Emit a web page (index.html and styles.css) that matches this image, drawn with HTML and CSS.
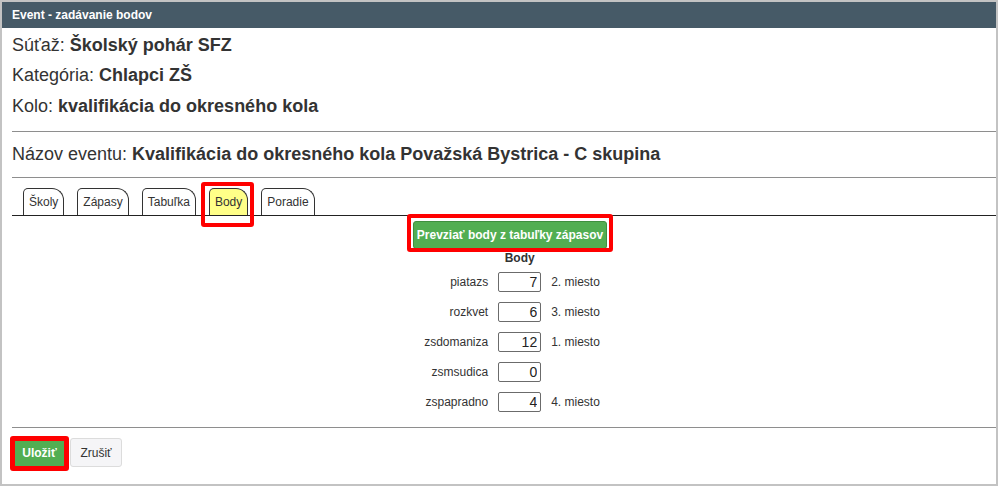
FILE: index.html
```html
<!DOCTYPE html>
<html lang="sk">
<head>
<meta charset="utf-8">
<title>Event - zadávanie bodov</title>
<link rel="stylesheet" href="styles.css">
</head>
<body>
<div class="window">
  <div class="titlebar">Event - zadávanie bodov</div>
  <div class="content">
    <div class="info">
      <div class="row">Súťaž: <b>Školský pohár SFZ</b></div>
      <div class="row">Kategória: <b>Chlapci ZŠ</b></div>
      <div class="row">Kolo: <b>kvalifikácia do okresného kola</b></div>
    </div>
    <hr class="sep sep-1">
    <div class="row row-name">Názov eventu: <b>Kvalifikácia do okresného kola Považská Bystrica - C skupina</b></div>
    <hr class="sep sep-2">
    <nav class="tabs">
      <span class="tab">Školy</span>
      <span class="tab">Zápasy</span>
      <span class="tab">Tabuľka</span>
      <span class="tab tab-active marked">Body</span>
      <span class="tab">Poradie</span>
    </nav>
    <div class="panel">
      <div class="actions">
        <button class="btn btn-green btn-take marked">Prevziať body z tabuľky zápasov</button>
      </div>
      <div class="points">
        <div class="lbl"></div><div class="head">Body</div><div class="place"></div>
        <div class="lbl">piatazs</div><input class="num" value="7"><div class="place">2. miesto</div>
        <div class="lbl">rozkvet</div><input class="num" value="6"><div class="place">3. miesto</div>
        <div class="lbl">zsdomaniza</div><input class="num" value="12"><div class="place">1. miesto</div>
        <div class="lbl">zsmsudica</div><input class="num" value="0"><div class="place"></div>
        <div class="lbl">zspapradno</div><input class="num" value="4"><div class="place">4. miesto</div>
      </div>
    </div>
    <hr class="sep sep-3">
    <div class="footer">
      <button class="btn btn-green btn-save marked">Uložiť</button>
      <button class="btn btn-light">Zrušiť</button>
    </div>
  </div>
</div>
</body>
</html>
```

FILE: styles.css
```css
* { box-sizing: border-box; }
html, body { margin: 0; padding: 0; background: #fff; }
body { font-family: "Liberation Sans", Arial, sans-serif; color: #333; }

.window {
  width: 998px;
  height: 486px;
  border: 2px solid #c3c3c3;
  overflow: hidden;
  background: #fff;
}
.titlebar {
  height: 26px;
  background: #465a67;
  color: #fff;
  font-weight: bold;
  font-size: 12px;
  line-height: 26px;
  padding-left: 10px;
}
.content {
  margin-left: 10px;
  width: 996px;
}
.info { padding-top: 2px; }
.row {
  font-size: 18px;
  line-height: 30px;
  height: 30px;
  white-space: nowrap;
}
.info .row:nth-child(3) { margin-top: 1px; }
.row b { font-weight: bold; }
.sep {
  border: 0;
  border-top: 1px solid #8e8e8e;
  margin: 0;
}
.sep-1 { margin-top: 10px; }
.row-name { margin-top: 7px; }
.sep-2 { margin-top: 8px; }

.tabs {
  margin-top: 10px;
  display: flex;
  gap: 13px;
  padding-left: 11px;
  border-bottom: 1px solid #222;
  height: 28px;
  align-items: flex-end;
}
.tab {
  height: 27px;
  padding: 0 5px;
  border: 1px solid #333;
  border-bottom: 0;
  border-radius: 5px 12px 0 0;
  font-size: 12px;
  line-height: 27px;
  color: #333;
  background: #fff;
  white-space: nowrap;
}
.tab-active { background: #ffff88; }

.marked { position: relative; }
.marked::after {
  content: "";
  position: absolute;
  border: 4px solid #ff0000;
  border-radius: 3px;
  pointer-events: none;
}
.tab-active.marked::after { left: -9px; right: -7px; top: -7px; bottom: -12px; }
.btn-take.marked::after { left: -7px; right: -7px; top: -8px; bottom: -4px; }
.btn-save.marked::after { left: -4px; right: -4px; top: -3px; bottom: -5px; border-width: 5px; }

.panel { padding-top: 5px; }
.actions { display: flex; justify-content: center; }
.btn {
  font-family: "Liberation Sans", Arial, sans-serif;
  font-size: 12px;
  border-radius: 3px;
  cursor: pointer;
  white-space: nowrap;
}
.btn-green {
  background: #52ae52;
  border: 1px solid #3f8f3f;
  color: #fff;
  font-weight: bold;
}
.btn-take { height: 28px; padding: 0; width: 194px; }

.points {
  display: grid;
  grid-template-columns: auto 43px auto;
  grid-template-rows: 18px;
  grid-auto-rows: 30px;
  column-gap: 10px;
  justify-content: center;
  margin-left: 4px;
  font-size: 12px;
  align-items: center;
}
.head {
  text-align: center;
  font-weight: bold;
  line-height: 18px;
  white-space: nowrap;
  display: flex;
  justify-content: center;
}
.lbl { text-align: right; white-space: nowrap; }
.place { white-space: nowrap; min-width: 48px; }
.num {
  width: 43px;
  height: 20px;
  border: 1px solid #6b6b6b;
  border-radius: 2px;
  text-align: right;
  font-family: "Liberation Sans", Arial, sans-serif;
  font-size: 14px;
  color: #222;
  padding: 0 3px;
  margin: 0;
}

.sep-3 { margin-top: 10px; }
.footer {
  display: flex;
  gap: 4px;
  margin-top: 10px;
  padding-left: 1px;
}
.btn-save { height: 29px; width: 53px; padding: 0; }
.btn-light {
  height: 29px;
  width: 52px;
  padding: 0;
  background: #f5f5f7;
  border: 1px solid #dcdcdc;
  color: #333;
}
```
